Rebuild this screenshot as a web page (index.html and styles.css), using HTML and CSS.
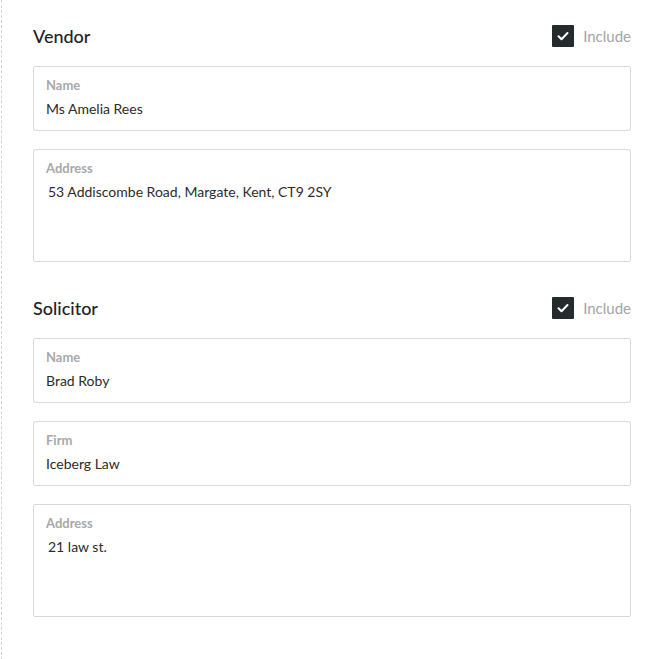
FILE: index.html
```html
<!DOCTYPE html>
<html lang="en">
<head>
  <meta charset="UTF-8">
  <title>Parties</title>
  <meta name="viewport" content="width=device-width, initial-scale=1.0">
  <link rel="stylesheet" href="styles.css">
</head>
<body>

  <div class="panel">

    <!-- Vendor -->
    <section class="party">
      <div class="party-head">
        <h2 class="party-title">Vendor</h2>
        <label class="include">
          <span class="check">
            <svg viewBox="0 0 22 22" width="22" height="22"><path d="M6.5 11.3l3 3 6-6.3" fill="none" stroke="#fff" stroke-width="2" stroke-linecap="round" stroke-linejoin="round"/></svg>
          </span>
          Include
        </label>
      </div>

      <div class="field">
        <div class="field-label">Name</div>
        <div class="field-value">Ms Amelia Rees</div>
      </div>

      <div class="field field-area">
        <div class="field-label">Address</div>
        <div class="field-value">53 Addiscombe Road, Margate, Kent, CT9 2SY</div>
      </div>
    </section>

    <!-- Solicitor -->
    <section class="party">
      <div class="party-head">
        <h2 class="party-title">Solicitor</h2>
        <label class="include">
          <span class="check">
            <svg viewBox="0 0 22 22" width="22" height="22"><path d="M6.5 11.3l3 3 6-6.3" fill="none" stroke="#fff" stroke-width="2" stroke-linecap="round" stroke-linejoin="round"/></svg>
          </span>
          Include
        </label>
      </div>

      <div class="field">
        <div class="field-label">Name</div>
        <div class="field-value">Brad Roby</div>
      </div>

      <div class="field">
        <div class="field-label">Firm</div>
        <div class="field-value">Iceberg Law</div>
      </div>

      <div class="field field-area">
        <div class="field-label">Address</div>
        <div class="field-value">21 law st.</div>
      </div>
    </section>

  </div>

</body>
</html>
```

FILE: styles.css
```css
body {
  font-family: Lato, 'Open Sans', sans-serif;
  background: #fff;
  margin: 0;
  color: #333;
}

.panel {
  margin-left: 1px;
  border-left: 1px dashed #d4d4d4;
  padding: 25px 27px 40px 31px;
  min-height: 600px;
}

.party + .party {
  margin-top: 35px;
}

.party-head {
  display: flex;
  align-items: center;
  justify-content: space-between;
  height: 22px;
  margin-bottom: 19px;
}

.party-title {
  margin: 0;
  font-size: 18px;
  font-weight: 500;
  color: #222;
}

.include {
  display: flex;
  align-items: center;
  gap: 9px;
  font-size: 15px;
  color: #a3a3a3;
}

.check {
  display: block;
  width: 22px;
  height: 22px;
  background: #252b2c;
  border-radius: 1px;
}

.check svg {
  display: block;
}

.field {
  border: 1px solid #d9d9d9;
  border-radius: 2px;
  height: 65px;
  box-sizing: border-box;
  padding: 10px 12px 0;
  margin-bottom: 18px;
}

.field-area {
  height: 113px;
}

.field-area .field-value {
  padding-left: 2px;
}

.field-label {
  font-size: 13px;
  font-weight: 700;
  color: #a8a8a8;
  line-height: 16px;
}

.field-value {
  font-size: 14px;
  line-height: 20px;
  margin-top: 6px;
  color: #2b2b2b;
}
```
